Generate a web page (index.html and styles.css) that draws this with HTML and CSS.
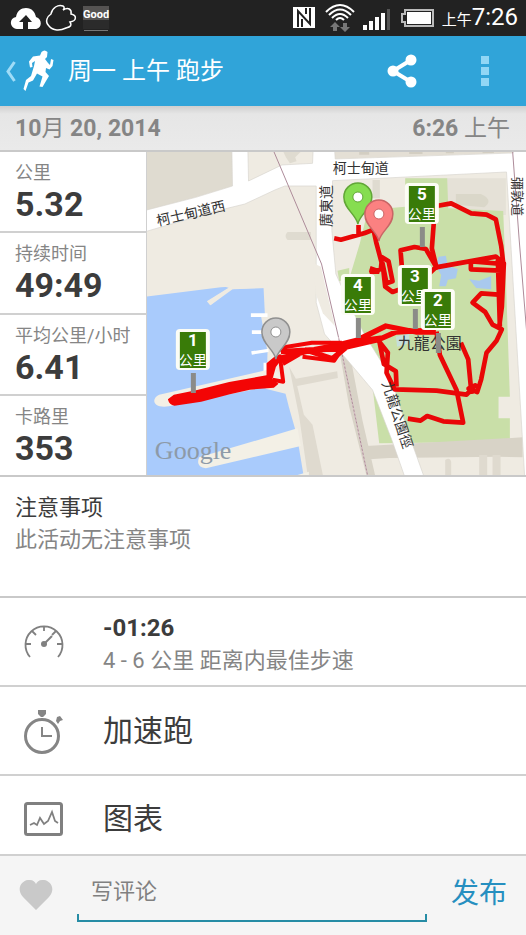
FILE: index.html
```html
<!DOCTYPE html>
<html lang="zh-CN">
<head>
<meta charset="utf-8">
<meta name="viewport" content="width=device-width, initial-scale=1">
<title>周一 上午 跑步</title>
<link rel="stylesheet" href="styles.css">
</head>
<body>
<div class="app">
  <div class="status">
    <svg class="status-left" width="100" height="36" viewBox="10 0 100 36" aria-hidden="true">
      <path fill="#fff" d="M23 29H17c-8-1-8-11-1-12 1-6 5-9 10-9 6 0 9 4 10 9 7 2 6 12-1 12h-7v-7h4l-6-7-7 7h4z"/>
      <path fill="none" stroke="#fff" stroke-width="1.500" d="M49 26c-5-5-1-10 2-12 1-6 7-10 12-8 2 1 1 3 0 4 5-3 9-1 8 4 6 1 6 7-1 8 2 3 1 5-4 6-6 3-13 3-17-2z"/>
      <path fill="#555352" d="M83 6h26v14H83z"/>
      <path fill="#2b2b2b" d="M83 20h26v9H83z"/>
      <path stroke="#777" d="M84 30.500h24"/>
      <text class="status-badge" x="83" y="18">Good</text>
    </svg>
    <div class="status-right">
      <svg width="150" height="36" viewBox="290 0 150 36" aria-hidden="true">
        <path fill="#fff" d="M293 7h22v21h-22z"/>
        <path fill="none" stroke="#222" stroke-width="2" d="M298 27V11l12 13V8M302 27V19M306 8v6"/>
        <g fill="none" stroke="#fff" stroke-width="2"><path d="M326 12q14-14 28 0M329 15q11-11 22 0M332 18q8-8 16 0M336 20q4-4 8 0"/></g>
        <path fill="#777" d="M335 22l5 5h-3v4h-4v-4h-3zM343 23h4v4h3l-5 5-5-5h3z"/>
        <path fill="#fff" d="M363 25h4v5h-4zM369 21h4v9h-4zM375 17h4v13h-4zM381 13h4v17h-4z"/>
        <path fill="#555" d="M387 9h3v21h-3z"/>
        <path fill="none" stroke="#bbb" stroke-width="2" d="M405 10h28v16h-28v-4h-3v-8h3z"/>
        <path fill="#fff" d="M407 12h24v12h-24z"/>
      </svg>
      <span class="clock"><small>上午</small>7:26</span>
    </div>
  </div>

  <header class="bar">
    <button class="back" aria-label="返回">
      <svg width="52" height="48" viewBox="4 47 52 48" aria-hidden="true">
        <path fill="none" stroke="#9fdcf7" stroke-width="3" d="M14.500 62L8 71.500l6.500 9.500"/>
        <path fill="#fff" d="M41.500 52q3-3 6 0l-.5 5-2 2 3 4 2 2 1-6 2.500 1-1 6-3 3.500-3.500-1.500-.5 4 3.500 4-3 5-3.500 6-3-.5 3-10-5.500-3-4 7-4.500 2-3 8.500-2-2 2.500-9 5-4 3-10 1-5-3 2 .5 4-2.500.5-1-6 4-5 7-1z"/>
      </svg>
    </button>
    <h1>周一 上午 跑步</h1>
    <button class="tool" aria-label="分享">
      <svg width="30" height="34" viewBox="0 0 30 34" aria-hidden="true"><path fill="none" stroke="#fff" stroke-width="4" d="M24 6L6 17l18 11"/><g fill="#fff"><circle cx="24" cy="6" r="5.500"/><circle cx="6" cy="17" r="5.500"/><circle cx="24" cy="28" r="5.500"/></g></svg>
    </button>
    <button class="tool more" aria-label="更多">
      <svg width="8" height="30" viewBox="0 0 8 30" aria-hidden="true"><path fill="#91d6f5" d="M0 0h8v8H0zM0 11h8v8H0zM0 22h8v8H0z"/></svg>
    </button>
  </header>

  <div class="date"><span><b>10</b>月<b> 20, 2014</b></span><span><b>6:26</b> 上午</span></div>

  <section class="summary">
    <dl class="stats">
      <div><dt>公里</dt><dd>5.32</dd></div>
      <div><dt>持续时间</dt><dd>49:49</dd></div>
      <div><dt>平均公里/小时</dt><dd>6.41</dd></div>
      <div><dt>卡路里</dt><dd>353</dd></div>
    </dl>
    <svg class="map" viewBox="147 152 379 323" preserveAspectRatio="xMidYMid slice" role="img" aria-label="路线地图">
      <defs>
        <g id="flag"><path fill="#8b8b88" d="M15 44h5v20h-5z"/><rect width="34" height="41" rx="4" fill="#fcfdf5"/><path fill="#397b08" d="M4 3h26v36H4z"/></g>
        <path id="pin" stroke-width="1.500" d="M0 27C-2 17-14 12-14 0a14 14 0 0 1 28 0C14 12 2 17 0 27z"/>
      </defs>
      <!-- geography and route are drawn at three units to one map unit -->
      <g transform="translate(146 150) scale(.33333)">
        <path fill="#efebe2" d="M0 0h1145v985H0z"/>
        <!-- city blocks -->
        <path fill="#dfdbd0" d="M0 0h258l2 108L150 142 0 182zM410 0h60l-22 22 4 12-20 6-12-18zM425 246h70v24h-70q-12-12 0-24zM680 90h22v55h-22z"/>
        <path fill="#e4dfd5" d="M560 0h540v8L560 26z"/>
        <path fill="#d3cec2" d="M640 0h30v14h-30zM790 0h40v12h-40zM900 0h24v10h-24zM1010 0h34v10h-34z"/>
        <path fill="#e5e1d7" d="M780 85h300v110H900l-120-20z"/>
        <path fill="#dad7c9" d="M930 132h75q40 18 10 40l-85-8z"/>
        <!-- park -->
        <path fill="#c9dfa8" d="M778 85h126l3 90 165 8 8 200 12 357h-34v65h34v70L700 880l-20-170 10-90-70-70-50-30 72-240 24-100 112-10zM575 362l35-8v30l-30 10z"/>
        <path fill="#a9c9ee" d="M878 320l22-3 6 30 30 10-6 28-24 4-6 20h-20l6-34-16-26zM970 388l30 4 36-14v40l-45-4z"/>
        <path fill="#c6dedb" d="M750 560l40-10v30l-36 10z"/>
        <!-- lanes south of the park -->
        <path fill="#d8d3c7" d="M580 600l32 12 38 200 38 165h-26L610 770zM660 888l470-26v60l-70-2-330 4-60 4z"/>
        <path fill="#dfdacf" d="M430 650l20 36 124-22 2 20-122 24 20 86 26 30 32 156h-46L460 800zM898 930q14-10 18 6v45h-18zM1000 915h24v70h-24zM1040 915h24v70h-24z"/>
        <!-- roads -->
        <path fill="#fff" stroke="#d8d5cf" stroke-width="2" d="M-5 182L150 142 260 108 258-5h48l2 98 100-48 92-5 2-45h64l2 32 534-18V-5h50v995h-15L1082 66 560 92l-2 150 12 130 50 110 35 70 80 130 50 160 53 148h-58l-42-120-58-150-74-88-70-80-25-94V108h-94l-30 12-90 42-90 22L-5 246z"/>
        <path fill="#efebe2" d="M503 340l22 10 42 178-36-38-22-60z"/>
        <!-- harbour -->
        <path fill="#a9cbfc" d="M0 440l225-28 28-2-70 44 10 12 60-48 100-6 4 80-12 4 20 110-2 70-4 40 60 15 10 40 24 85 10 60 10 60 14 100H0z"/>
        <path fill="#efebe2" d="M230 408l20 6-64 40 8 12 66-48 105-4v-20z"/>
        <path fill="#fff" d="M315 490h50v11h-50zM318 541h50v11h-50zM316 604l52-8v10l-50 8zM353 638h15v45h-15z"/>
        <path fill="#f3f0e6" d="M40 734L385 655l34 44-350 70c-46 8-56-22-29-35zM160 922q-12 30 20 33l285-67-10-53zM445 978l44-13v20h-44z"/>
        <path fill="none" stroke="#ad8b99" stroke-width="3" d="M382 0l145 342 51 220 88 418M1100 0l20 270 26 320"/>
        <path fill="none" stroke="#f5dfe4" stroke-width="2" stroke-dasharray="6 6" d="M578 562l88 418"/>
        <!-- recorded route -->
        <g fill="none" stroke="#e90707" stroke-width="14" stroke-linejoin="round">
          <path d="M565 265l20 4 72-20 26-10 8 38 16 60-2 20-34 12M638 225v30M706 320l22 14 12 60-18 6-12-60 8 70 22 16 22-8M672 355l30 10"/>
          <path d="M872 168l44-8 60 30 46 4 28 14 16 80 6 50-2 90-10 110M864 215l-6 80 14 58-32-56-34-6-42 10 4 50M870 352l180-32 24 20-6 130-8 60M975 334v24l90 4 4-20-90-8M1056 330l6 200M870 352l-24 22"/>
          <path d="M1058 434l-52-4-26 28 38 28 22 38 28 14-16 34-30 36-16 80-12 38-26-10 20-10-26 28-90-12-126-4-24-50 4-60-30-38M700 572l14 70 36 22 2 46"/>
          <path d="M872 545l10 70 50 105 20 98-60-4-48-16-20 14-38-6M945 578l22 50 10 104"/>
        </g>
        <g fill="none" stroke="#f30505" stroke-width="16" stroke-linejoin="round">
          <path d="M405 605l100-6 70-14 60-15 85-42 90 18h60M400 626l90-24 100-8 110-26 50-22 80-4M410 640l70-40 80 26 60-50 90-12"/>
          <path stroke-width="12" d="M372 685l4-46 26-20 10 76-32-6M400 600l24-10 74-12h90M470 620l95 12 20-30"/>
        </g>
        <path fill="#f30505" d="M66 748l18-14 70-14 96-24 112-20v-36l30-25 16 12-18 24-10 36 18 14-14 12-72 6-60 14-86 22-80 12q-16-2-20-19z"/>
      </g>
      <!-- street names -->
      <g class="street">
        <text transform="translate(158 226) rotate(-13)">柯士甸道西</text>
        <text x="333" y="173">柯士甸道</text>
        <text transform="translate(331 227) rotate(-90)">廣東道</text>
        <text class="edge" transform="translate(513 177) rotate(90)">彌敦道</text>
        <text transform="translate(382 383) rotate(72)">九龍公園徑</text>
        <text class="park" x="398" y="349">九龍公園</text>
      </g>
      <text class="google" x="155" y="459">Google</text>
      <!-- kilometre flags and pins -->
      <g class="flag">
        <use href="#flag" x="176" y="329"/><text class="num" x="193" y="346">1</text><text x="193" y="365">公里</text>
        <use href="#flag" x="341" y="274"/><text class="num" x="358" y="291">4</text><text x="358" y="310">公里</text>
        <use href="#flag" x="398" y="265"/><text class="num" x="415" y="282">3</text><text x="415" y="301">公里</text>
        <use href="#flag" x="405" y="183"/><text class="num" x="422" y="200">5</text><text x="422" y="219">公里</text>
        <use href="#flag" x="421" y="289"/><text class="num" x="438" y="306">2</text><text x="438" y="325">公里</text>
      </g>
      <g stroke="#62a637" fill="#86dd50"><use href="#pin" x="358" y="197"/><circle cx="358" cy="197" r="5" fill="#fff"/></g>
      <g stroke="#c96565" fill="#fb8181"><use href="#pin" x="379" y="214"/><circle cx="379" cy="214" r="5" fill="#fff"/></g>
      <g stroke="#909090" fill="#c9c9c9"><use href="#pin" x="276" y="332"/><circle cx="276" cy="332" r="5" fill="#fff"/></g>
    </svg>
  </section>

  <section class="notes"><h2>注意事项</h2><p>此活动无注意事项</p></section>

  <section class="row pace">
    <svg width="40" height="48" viewBox="0 0 40 48" aria-hidden="true"><g fill="none" stroke="#808080" stroke-width="1.800"><path d="M6 37A18.500 18.500 0 1 1 34 37M20 6v5M8 11l4 4M32 11l-4 4M2 24h5M38 24h-5"/><path stroke-width="2" d="M20 24l8-8"/></g><circle cx="20" cy="24" r="3" fill="#808080"/></svg>
    <div><strong>-01:26</strong><p>4 - 6 公里 距离内最佳步速</p></div>
  </section>
  <a class="row link" href="#splits">
    <svg width="40" height="48" viewBox="0 0 40 48" aria-hidden="true"><circle cx="18" cy="29" r="16.500" fill="none" stroke="#858585" stroke-width="3"/><path fill="none" stroke="#858585" stroke-width="2" d="M18 20v9h10"/><path fill="#858585" d="M14 3h8v4l-3 3h-2l-3-3zM32 14l1-4 3-1 3 4-3 1-2 3z"/></svg>
    <span>加速跑</span>
  </a>
  <a class="row link" href="#charts">
    <svg width="40" height="34" viewBox="0 0 40 34" aria-hidden="true"><rect x="1.500" y="1.500" width="36" height="31" rx="2" fill="none" stroke="#808080" stroke-width="3"/><path fill="none" stroke="#808080" stroke-width="1.800" d="M6 23l4-2 3 2 3-7 4 6 4-3 4-9 3 9 3 2"/></svg>
    <span>图表</span>
  </a>

  <form class="comment">
    <button class="like" type="button" aria-label="赞"><svg width="34" height="30" viewBox="0 0 34 30" aria-hidden="true"><path fill="#c9c9c9" d="M17 30L4 17C-4 8 4-1 11 0c3 0 5 2 6 4 1-2 3-4 6-4 7-1 15 8 7 17z"/></svg></button>
    <div class="field"><input type="text" aria-label="写评论" placeholder="写评论"></div>
    <button class="post" type="submit">发布</button>
  </form>
</div>
</body>
</html>
```
FILE: styles.css
```css
* { box-sizing: border-box; }

body {
  margin: 0;
  background: #fff;
  color: #3c3c3c;
  font-family: Roboto, "Noto Sans CJK SC", sans-serif;
}

h1, h2, p, dl, dd { margin: 0; font-weight: 400; }
button { padding: 0; border: 0; background: none; font: inherit; }
svg { display: block; flex: none; }

.app { min-height: 100vh; display: flex; flex-direction: column; }

.status {
  display: flex;
  justify-content: space-between;
  height: 36px;
  padding: 0 8px 0 10px;
  background: #222;
  color: #fff;
}
.status-badge { font: 700 11px Roboto, sans-serif; fill: #fff; }
.status-right { display: flex; align-items: center; gap: 2px; }
.clock { font-size: 24px; line-height: 36px; white-space: nowrap; }
.clock small { font-size: 15px; }

.bar {
  display: flex;
  align-items: center;
  height: 70px;
  padding: 0 37px 0 4px;
  background: #30a4d9;
  color: #fff;
}
.bar h1 { flex: 1; margin-left: 12px; font-size: 24px; line-height: 32px; }
.more { margin-left: 64px; }

.date {
  display: flex;
  justify-content: space-between;
  height: 46px;
  padding: 0 16px 0 15px;
  border-bottom: 2px solid #c9c9c9;
  background: linear-gradient(#cfcfcf, #e6e6e6 8px, #eaeaea);
  color: #858585;
  font-size: 23px;
  line-height: 46px;
}

.summary {
  display: grid;
  grid-template-columns: 28fr 72fr;
  border-bottom: 2px solid #c9c9c9;
}
.stats { display: grid; border-right: 1px solid #d0d0d0; }
.stats div { padding: 10px 0 7px 15px; border-bottom: 2px solid #d0d0d0; white-space: nowrap; }
.stats div:last-child { border-bottom: 0; }
.stats dt { color: #858585; font-size: 18px; line-height: 22px; }
.stats dd { font-size: 34px; line-height: 40px; font-weight: 700; }

.map { width: 100%; height: 100%; min-height: 323px; }
.street { font: 14px "Noto Sans CJK TC", sans-serif; fill: #333; }
.park { font-size: 16px; }
.edge { font-size: 13px; }
.google { font: 26px "Liberation Serif", serif; fill: #8d9aa8; }
.flag { font: 14px "Noto Sans CJK SC", sans-serif; fill: #fff; text-anchor: middle; }
.num { font: 700 17px Roboto, sans-serif; }

.notes {
  min-height: 121px;
  padding: 15px;
  border-bottom: 2px solid #c9c9c9;
  font-size: 22px;
  line-height: 32px;
}
.notes h2 { font-size: inherit; }
.notes p, .pace p { color: #858585; }

.row {
  display: flex;
  align-items: center;
  gap: 39px;
  min-height: 89px;
  padding: 0 24px;
  border-bottom: 2px solid #d0d0d0;
  color: inherit;
  text-decoration: none;
}
.pace { padding-top: 5px; font-size: 22px; line-height: 32px; }
.pace strong { font-size: 24px; }
.link { font-size: 30px; line-height: 40px; }
.link + .link { min-height: 80px; padding-top: 8px; }

.comment {
  flex: 1;
  display: flex;
  align-items: flex-start;
  min-height: 79px;
  padding: 0 19px;
  background: #f5f5f5;
}
.like { margin: 24px 24px 0 0; }
.field {
  flex: 1;
  min-width: 0;
  height: 66px;
  background: linear-gradient(#268ca5, #268ca5) left bottom / 2px 6px no-repeat, linear-gradient(#268ca5, #268ca5) right bottom / 2px 6px no-repeat;
  border-bottom: 2px solid #268ca5;
}
.field input {
  width: 100%;
  height: 64px;
  padding: 6px 14px 0;
  border: 0;
  outline: 0;
  background: none;
  color: #3c3c3c;
  font: 22px Roboto, "Noto Sans CJK SC", sans-serif;
}
.field input::placeholder { color: #808080; opacity: 1; }
.post { margin: 18px 0 0 24px; color: #268fc0; font-size: 28px; line-height: 40px; }
```
